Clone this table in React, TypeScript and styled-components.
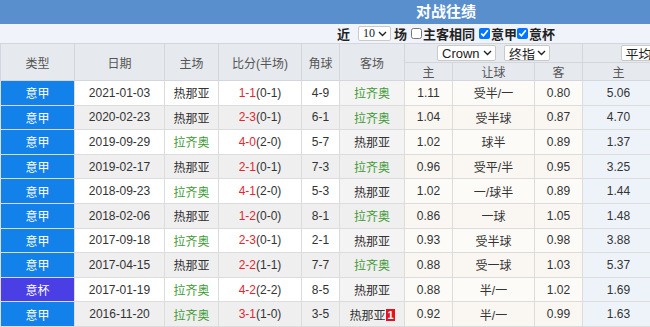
import React from "react";
import styled, { createGlobalStyle } from "styled-components";

const GlobalStyle = createGlobalStyle`
  html, body {
    margin: 0;
    padding: 0;
    background: #fff;
  }
  body {
    font-family: "Liberation Sans", "Noto Sans CJK SC", sans-serif;
    font-size: 12px;
    color: #333;
  }
`;

const Wrap = styled.div`
  width: 892px;
`;

const Title = styled.div`
  height: 24px;
  line-height: 24px;
  background: #5a8fcd;
  color: #fff;
  font-weight: bold;
  font-size: 15px;
  text-align: center;
`;

const Filter = styled.div`
  height: 19px;
  background: #f0f4fa;
  display: flex;
  align-items: center;
  justify-content: center;
  font-size: 13px;
  font-weight: bold;
  color: #222;
`;

const Label = styled.span<{ $left?: number; $right?: number }>`
  margin-left: ${(p) => p.$left ?? 0}px;
  margin-right: ${(p) => p.$right ?? 0}px;
`;

const Check = styled.input<{ $left?: number }>`
  width: 11px;
  height: 11px;
  margin: 0 1px 0 ${(p) => p.$left ?? 4}px;
`;

const FakeSelect = styled.span<{ $w: number; $serif?: boolean; $h?: number }>`
  display: inline-flex;
  align-items: center;
  justify-content: space-between;
  box-sizing: border-box;
  width: ${(p) => p.$w}px;
  height: ${(p) => p.$h ?? 16}px;
  padding: 0 3px 0 4px;
  border: 1px solid #c9c9c9;
  border-radius: 2px;
  background: #fff;
  color: #222;
  font-weight: normal;
  font-family: ${(p) =>
    p.$serif ? `"Liberation Serif", serif` : `"Liberation Sans", "Noto Sans CJK SC", sans-serif`};
  font-size: ${(p) => (p.$serif ? 12 : 13)}px;
  vertical-align: middle;
  white-space: nowrap;
  overflow: hidden;
`;

const Chevron = () => (
  <svg width="9" height="6" viewBox="0 0 9 6" style={{ flexShrink: 0 }}>
    <path d="M1 1l3.5 3.5L8 1" fill="none" stroke="#222" strokeWidth="1.4" />
  </svg>
);

const Table = styled.table`
  width: 892px;
  border-collapse: collapse;
  table-layout: fixed;
`;

const Th = styled.th<{ $h: number }>`
  height: ${(p) => p.$h}px;
  padding: 0;
  background: #e6e9ee;
  border: 1px solid #d3d7dd;
  font-weight: normal;
  color: #555;
  font-size: 12px;
  text-align: center;
  white-space: nowrap;
  overflow: hidden;
`;

const GroupInner = styled.div`
  display: flex;
  justify-content: center;
  gap: 8px;
`;

const Td = styled.td<{ $bg?: string; $color?: string }>`
  height: 23.6px;
  padding: 0;
  text-align: center;
  border: 1px solid #dcdcdc;
  background: ${(p) => p.$bg ?? "#fff"};
  color: ${(p) => p.$color ?? "#333"};
  white-space: nowrap;
`;

const Score = styled.span`
  color: #e3262f;
`;

const RedCard = styled.span`
  display: inline-block;
  background: #e8101c;
  color: #fff;
  font-weight: bold;
  font-size: 11px;
  line-height: 12px;
  padding: 0 1px;
  margin-left: 1px;
  vertical-align: 1px;
`;

const widths = [74, 90, 54, 83, 38, 65, 48, 82, 48, 72, 72, 72, 46, 48];

type Row = {
  type: string;
  date: string;
  home: string;
  score: string;
  half: string;
  corner: string;
  away: string;
  h: string;
  line: string;
  a: string;
  avg: string;
  card?: string;
};

const rows: Row[] = [
  { type: "意甲", date: "2021-01-03", home: "热那亚", score: "1-1", half: "(0-1)", corner: "4-9", away: "拉齐奥", h: "1.11", line: "受半/一", a: "0.80", avg: "5.06" },
  { type: "意甲", date: "2020-02-23", home: "热那亚", score: "2-3", half: "(0-1)", corner: "6-1", away: "拉齐奥", h: "1.04", line: "受半球", a: "0.87", avg: "4.70" },
  { type: "意甲", date: "2019-09-29", home: "拉齐奥", score: "4-0", half: "(2-0)", corner: "5-7", away: "热那亚", h: "1.02", line: "球半", a: "0.89", avg: "1.37" },
  { type: "意甲", date: "2019-02-17", home: "热那亚", score: "2-1", half: "(0-1)", corner: "7-3", away: "拉齐奥", h: "0.96", line: "受平/半", a: "0.95", avg: "3.25" },
  { type: "意甲", date: "2018-09-23", home: "拉齐奥", score: "4-1", half: "(2-0)", corner: "5-3", away: "热那亚", h: "1.02", line: "一/球半", a: "0.89", avg: "1.44" },
  { type: "意甲", date: "2018-02-06", home: "热那亚", score: "1-2", half: "(0-0)", corner: "8-1", away: "拉齐奥", h: "0.86", line: "一球", a: "1.05", avg: "1.48" },
  { type: "意甲", date: "2017-09-18", home: "拉齐奥", score: "2-3", half: "(0-1)", corner: "2-1", away: "热那亚", h: "0.93", line: "受半球", a: "0.98", avg: "3.88" },
  { type: "意甲", date: "2017-04-15", home: "热那亚", score: "2-2", half: "(1-1)", corner: "7-7", away: "拉齐奥", h: "0.88", line: "受一球", a: "1.03", avg: "5.37" },
  { type: "意杯", date: "2017-01-19", home: "拉齐奥", score: "4-2", half: "(2-2)", corner: "8-5", away: "热那亚", h: "0.88", line: "半/一", a: "1.02", avg: "1.69" },
  { type: "意甲", date: "2016-11-20", home: "拉齐奥", score: "3-1", half: "(1-0)", corner: "3-5", away: "热那亚", h: "0.92", line: "半/一", a: "0.99", avg: "1.63", card: "1" },
];

const GREEN = "#3f9a34";
const teamColor = (t: string) => (t === "拉齐奥" ? GREEN : "#333");

export default function App() {
  return (
    <Wrap>
      <GlobalStyle />
      <Title>对战往绩</Title>
      <Filter>
        <Label $right={8}>近</Label>
        <FakeSelect $w={33} $h={15} $serif>
          10 <Chevron />
        </FakeSelect>
        <Label $left={3}>场</Label>
        <Check type="checkbox" />
        <Label>主客相同</Label>
        <Check type="checkbox" defaultChecked />
        <Label>意甲</Label>
        <Check type="checkbox" defaultChecked $left={0} />
        <Label>意杯</Label>
      </Filter>
      <Table>
        <colgroup>
          {widths.map((w, i) => (
            <col key={i} style={{ width: w }} />
          ))}
        </colgroup>
        <thead>
          <tr>
            <Th $h={18} rowSpan={2}>类型</Th>
            <Th $h={18} rowSpan={2}>日期</Th>
            <Th $h={18} rowSpan={2}>主场</Th>
            <Th $h={18} rowSpan={2}>比分(半场)</Th>
            <Th $h={18} rowSpan={2}>角球</Th>
            <Th $h={18} rowSpan={2}>客场</Th>
            <Th $h={18} colSpan={3}>
              <GroupInner>
                <FakeSelect $w={59}>
                  Crown <Chevron />
                </FakeSelect>
                <FakeSelect $w={46}>
                  终指 <Chevron />
                </FakeSelect>
              </GroupInner>
            </Th>
            <Th $h={18} colSpan={3}>
              <GroupInner>
                <FakeSelect $w={140}>
                  平均欧指 <Chevron />
                </FakeSelect>
              </GroupInner>
            </Th>
            <Th $h={18} rowSpan={2}>盘路</Th>
            <Th $h={18} rowSpan={2}>大小</Th>
          </tr>
          <tr>
            <Th $h={17}>主</Th>
            <Th $h={17}>让球</Th>
            <Th $h={17}>客</Th>
            <Th $h={17}>主</Th>
            <Th $h={17}>和</Th>
            <Th $h={17}>客</Th>
          </tr>
        </thead>
        <tbody>
          {rows.map((r, i) => {
            const even = i % 2 === 1;
            const base = even ? "#efefef" : "#fff";
            const cream = even ? "#faf7f2" : "#fdfbf7";
            const blue = "#eef3fa";
            return (
              <tr key={r.date}>
                <Td $bg={r.type === "意杯" ? "#4a3ee5" : "#1282ea"} $color="#fff">
                  {r.type}
                </Td>
                <Td $bg={base}>{r.date}</Td>
                <Td $bg={base} $color={teamColor(r.home)}>{r.home}</Td>
                <Td $bg={base}>
                  <Score>{r.score}</Score>
                  {r.half}
                </Td>
                <Td $bg={base}>{r.corner}</Td>
                <Td $bg={even ? "#efefef" : "#f4f4f4"} $color={teamColor(r.away)}>
                  {r.away}
                  {r.card && <RedCard>{r.card}</RedCard>}
                </Td>
                <Td $bg={cream}>{r.h}</Td>
                <Td $bg={cream}>{r.line}</Td>
                <Td $bg={cream}>{r.a}</Td>
                <Td $bg={blue}>{r.avg}</Td>
                <Td $bg={blue}>3.90</Td>
                <Td $bg={blue}>1.62</Td>
                <Td $bg={base}>赢</Td>
                <Td $bg={base}>大</Td>
              </tr>
            );
          })}
        </tbody>
      </Table>
    </Wrap>
  );
}
